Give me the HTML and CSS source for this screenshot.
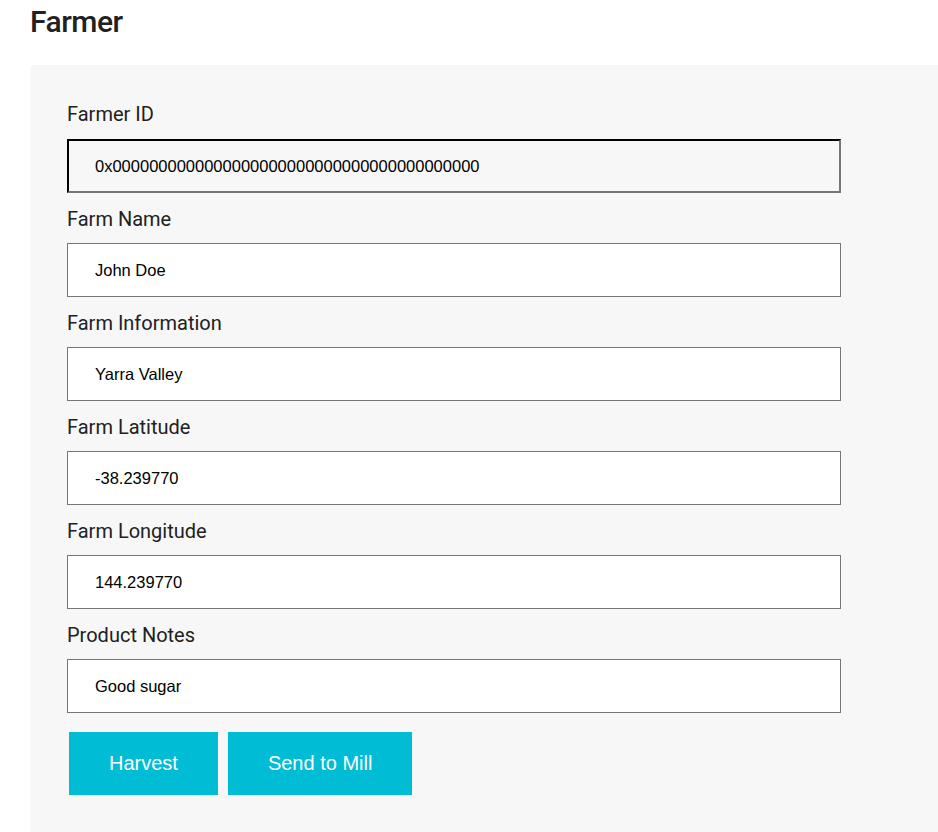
FILE: index.html
```html
<!DOCTYPE html>
<html lang="en">
<head>
<meta charset="utf-8">
<title>Farmer</title>
<link rel="stylesheet" href="styles.css">
</head>
<body>
<div class="page">
  <h1 class="title">Farmer</h1>
  <div class="panel">
    <form class="form">
      <div class="field">
        <label class="label" for="fid">Farmer ID</label>
        <input class="input input-readonly" id="fid" type="text" value="0x0000000000000000000000000000000000000000" readonly>
      </div>
      <div class="field">
        <label class="label" for="fname">Farm Name</label>
        <input class="input" id="fname" type="text" value="John Doe">
      </div>
      <div class="field">
        <label class="label" for="finfo">Farm Information</label>
        <input class="input" id="finfo" type="text" value="Yarra Valley">
      </div>
      <div class="field">
        <label class="label" for="flat">Farm Latitude</label>
        <input class="input" id="flat" type="text" value="-38.239770">
      </div>
      <div class="field">
        <label class="label" for="flon">Farm Longitude</label>
        <input class="input" id="flon" type="text" value="144.239770">
      </div>
      <div class="field">
        <label class="label" for="fnotes">Product Notes</label>
        <input class="input" id="fnotes" type="text" value="Good sugar">
      </div>
      <div class="actions">
        <button class="btn" type="button">Harvest</button>
        <button class="btn" type="button">Send to Mill</button>
      </div>
    </form>
  </div>
</div>
</body>
</html>
```

FILE: styles.css
```css
* { box-sizing: border-box; }
html, body {
  margin: 0;
  padding: 0;
  background: #ffffff;
  overflow: hidden;
}
.page {
  padding-left: 30px;
}
.title {
  font-family: Roboto, "Liberation Sans", sans-serif;
  font-weight: 500;
  font-size: 30px;
  letter-spacing: -0.5px;
  line-height: 40px;
  color: #212121;
  margin: 0;
  padding-top: 2px;
  height: 65px;
}
.panel {
  background: #f7f7f7;
  border-radius: 4px 0 0 0;
  padding: 39px 0 40px 37px;
  min-height: 767px;
}
.form {
  width: 774px;
  display: flex;
  flex-direction: column;
  gap: 16px;
}
.field {
  display: flex;
  flex-direction: column;
}
.label {
  font-family: Roboto, "Liberation Sans", sans-serif;
  font-size: 20px;
  line-height: 21px;
  color: #212121;
  margin-bottom: 13px;
}
.field:first-child .label { margin-bottom: 14px; }
.input {
  height: 54px;
  width: 774px;
  border: 1px solid #767676;
  border-radius: 0;
  background: #ffffff;
  padding: 0 0 0 27px;
  font-family: "Liberation Sans", Arial, sans-serif;
  font-size: 16.5px;
  color: #000000;
  outline: none;
}
.input-readonly {
  border: 2px inset #767676;
  border-color: #1f1f1f #767676 #767676 #1f1f1f;
  background: #f7f7f7;
  padding-left: 26px;
}
.actions {
  display: flex;
  gap: 10px;
  padding-left: 2px;
  margin-top: 3px;
}
.btn {
  height: 63px;
  padding: 0 40px;
  border: none;
  border-radius: 0;
  background: #00bcd4;
  color: #ffffff;
  font-family: "Liberation Sans", Arial, sans-serif;
  font-size: 20px;
  cursor: pointer;
}
```
